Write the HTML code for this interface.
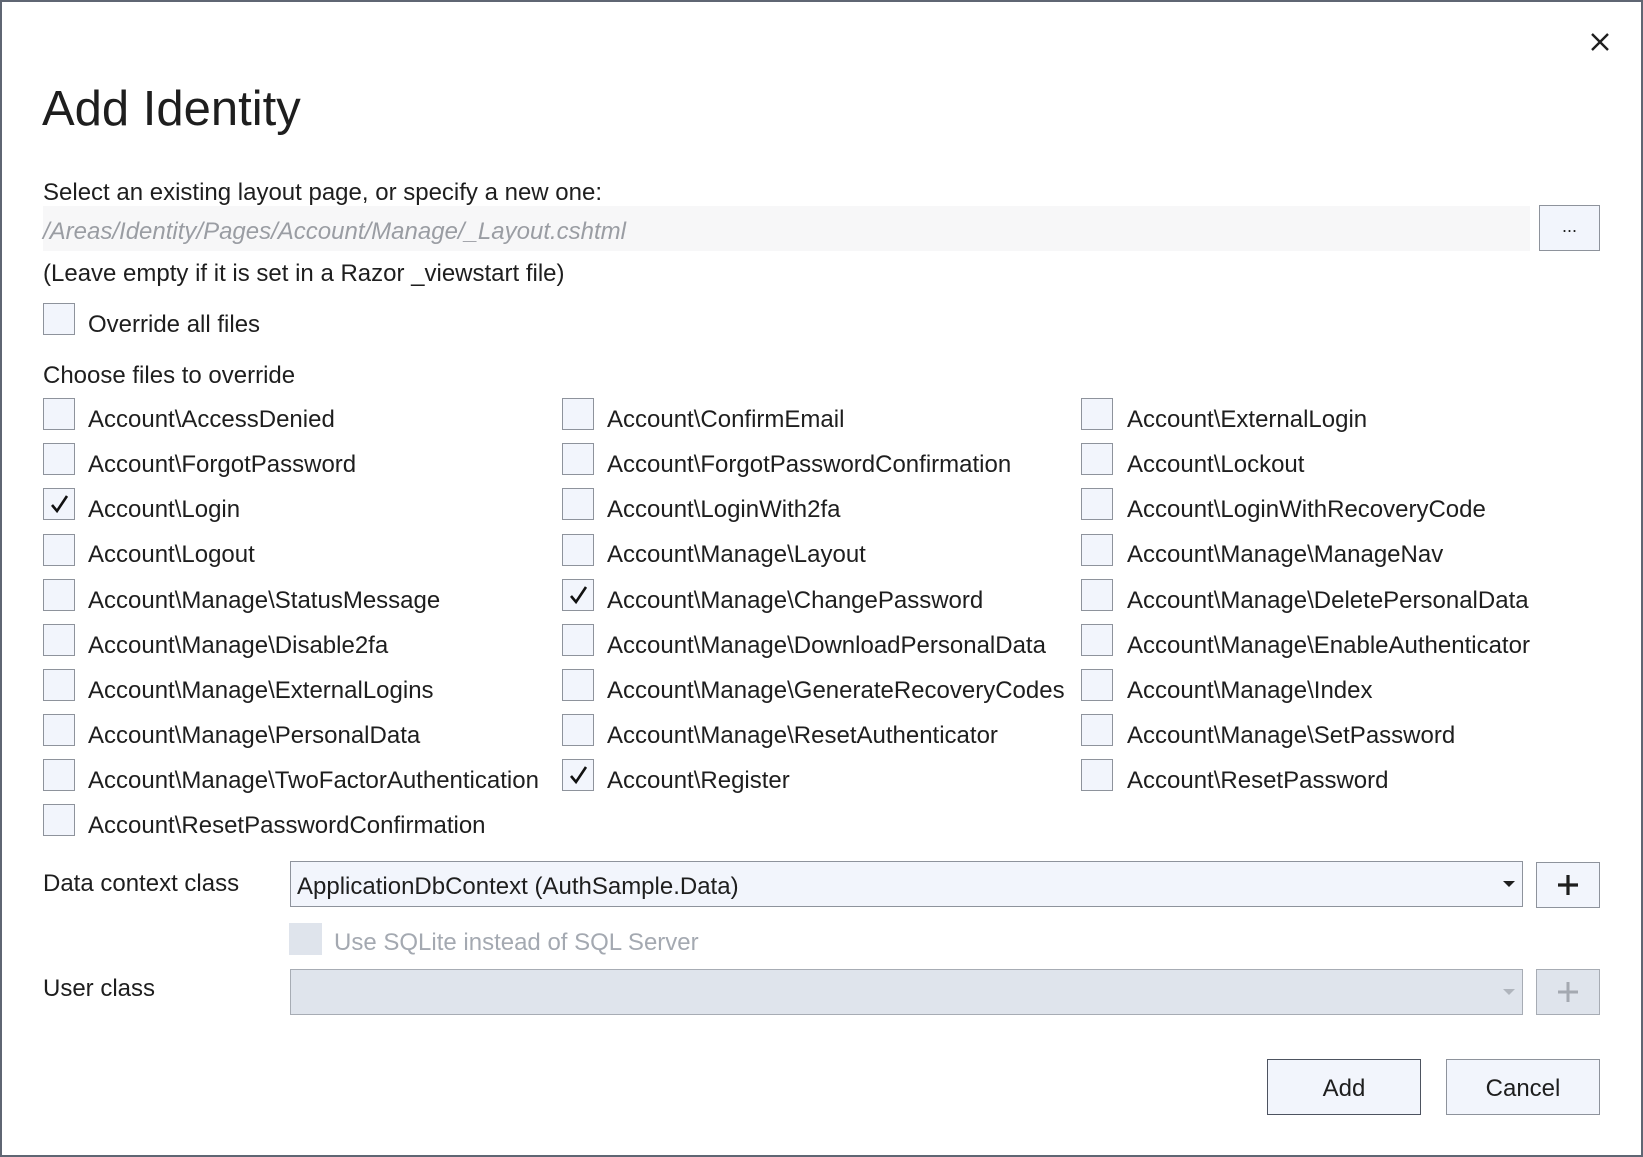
<!DOCTYPE html>
<html><head><meta charset="utf-8"><style>
*{box-sizing:border-box;margin:0;padding:0}
html,body{width:1643px;height:1157px;overflow:hidden;background:#fff}
body{position:relative;font-family:"Liberation Sans",sans-serif;color:#1e1e1e;font-size:24px}
.frame{position:absolute;left:0;top:0;width:1643px;height:1157px;border:2px solid #5f6673}
.a{position:absolute;white-space:nowrap}
.t{position:absolute;white-space:nowrap;height:30px;line-height:30px;font-size:24px;margin-top:3px}
.cb{position:absolute;width:32px;height:32px;background:#f2f5fc;border:1px solid #8e939c}
.cb svg{position:absolute;left:6px;top:5px}
.btn{position:absolute;background:#f2f5fc;border:1px solid #8e939c;text-align:center}
</style></head><body>
<div class="frame"></div>
<svg class="a" style="left:1590px;top:32px" width="20" height="20" viewBox="0 0 20 20"><path d="M2 2L18 18M18 2L2 18" stroke="#1e1e1e" stroke-width="2.4"/></svg>
<div class="a" style="left:42px;top:79px;font-size:49px;line-height:60px;color:#1e1e1e">Add Identity</div>
<div class="t" style="left:43px;top:175px">Select an existing layout page, or specify a new one:</div>
<div class="a" style="left:43px;top:206px;width:1487px;height:45px;background:#f7f7f8"></div>
<div class="t" style="left:43px;top:214px;font-style:italic;color:#9a9da3">/Areas/Identity/Pages/Account/Manage/_Layout.cshtml</div>
<div class="btn" style="left:1539px;top:205px;width:61px;height:46px;line-height:40px;font-size:18px">...</div>
<div class="t" style="left:43px;top:256px">(Leave empty if it is set in a Razor _viewstart file)</div>
<div class="cb" style="left:43px;top:303px"></div>
<div class="t" style="left:88px;top:307px">Override all files</div>
<div class="t" style="left:43px;top:358px">Choose files to override</div>

<div class="cb" style="left:43px;top:398px"></div><div class="t" style="left:88px;top:402px">Account\AccessDenied</div>
<div class="cb" style="left:562px;top:398px"></div><div class="t" style="left:607px;top:402px">Account\ConfirmEmail</div>
<div class="cb" style="left:1081px;top:398px"></div><div class="t" style="left:1127px;top:402px">Account\ExternalLogin</div>

<div class="cb" style="left:43px;top:443px"></div><div class="t" style="left:88px;top:447px">Account\ForgotPassword</div>
<div class="cb" style="left:562px;top:443px"></div><div class="t" style="left:607px;top:447px">Account\ForgotPasswordConfirmation</div>
<div class="cb" style="left:1081px;top:443px"></div><div class="t" style="left:1127px;top:447px">Account\Lockout</div>

<div class="cb" style="left:43px;top:488px"><svg width="20" height="20" viewBox="0 0 20 20"><path d="M2 11L7 17L17 2" fill="none" stroke="#111" stroke-width="2.6"/></svg></div><div class="t" style="left:88px;top:492px">Account\Login</div>
<div class="cb" style="left:562px;top:488px"></div><div class="t" style="left:607px;top:492px">Account\LoginWith2fa</div>
<div class="cb" style="left:1081px;top:488px"></div><div class="t" style="left:1127px;top:492px">Account\LoginWithRecoveryCode</div>

<div class="cb" style="left:43px;top:534px"></div><div class="t" style="left:88px;top:537px">Account\Logout</div>
<div class="cb" style="left:562px;top:534px"></div><div class="t" style="left:607px;top:537px">Account\Manage\Layout</div>
<div class="cb" style="left:1081px;top:534px"></div><div class="t" style="left:1127px;top:537px">Account\Manage\ManageNav</div>

<div class="cb" style="left:43px;top:579px"></div><div class="t" style="left:88px;top:583px">Account\Manage\StatusMessage</div>
<div class="cb" style="left:562px;top:579px"><svg width="20" height="20" viewBox="0 0 20 20"><path d="M2 11L7 17L17 2" fill="none" stroke="#111" stroke-width="2.6"/></svg></div><div class="t" style="left:607px;top:583px">Account\Manage\ChangePassword</div>
<div class="cb" style="left:1081px;top:579px"></div><div class="t" style="left:1127px;top:583px">Account\Manage\DeletePersonalData</div>

<div class="cb" style="left:43px;top:624px"></div><div class="t" style="left:88px;top:628px">Account\Manage\Disable2fa</div>
<div class="cb" style="left:562px;top:624px"></div><div class="t" style="left:607px;top:628px">Account\Manage\DownloadPersonalData</div>
<div class="cb" style="left:1081px;top:624px"></div><div class="t" style="left:1127px;top:628px">Account\Manage\EnableAuthenticator</div>

<div class="cb" style="left:43px;top:669px"></div><div class="t" style="left:88px;top:673px">Account\Manage\ExternalLogins</div>
<div class="cb" style="left:562px;top:669px"></div><div class="t" style="left:607px;top:673px">Account\Manage\GenerateRecoveryCodes</div>
<div class="cb" style="left:1081px;top:669px"></div><div class="t" style="left:1127px;top:673px">Account\Manage\Index</div>

<div class="cb" style="left:43px;top:714px"></div><div class="t" style="left:88px;top:718px">Account\Manage\PersonalData</div>
<div class="cb" style="left:562px;top:714px"></div><div class="t" style="left:607px;top:718px">Account\Manage\ResetAuthenticator</div>
<div class="cb" style="left:1081px;top:714px"></div><div class="t" style="left:1127px;top:718px">Account\Manage\SetPassword</div>

<div class="cb" style="left:43px;top:759px"></div><div class="t" style="left:88px;top:763px">Account\Manage\TwoFactorAuthentication</div>
<div class="cb" style="left:562px;top:759px"><svg width="20" height="20" viewBox="0 0 20 20"><path d="M2 11L7 17L17 2" fill="none" stroke="#111" stroke-width="2.6"/></svg></div><div class="t" style="left:607px;top:763px">Account\Register</div>
<div class="cb" style="left:1081px;top:759px"></div><div class="t" style="left:1127px;top:763px">Account\ResetPassword</div>

<div class="cb" style="left:43px;top:804px"></div><div class="t" style="left:88px;top:808px">Account\ResetPasswordConfirmation</div>

<div class="t" style="left:43px;top:866px">Data context class</div>
<div class="a" style="left:290px;top:861px;width:1233px;height:46px;background:#f2f5fc;border:1px solid #8e939c"></div>
<div class="t" style="left:297px;top:869px">ApplicationDbContext (AuthSample.Data)</div>
<svg class="a" style="left:1502px;top:880px" width="14" height="8"><path d="M1 1L13 1L7 7Z" fill="#1e1e1e"/></svg>
<div class="btn" style="left:1536px;top:862px;width:64px;height:46px"></div>
<svg class="a" style="left:1557px;top:874px" width="22" height="22"><path d="M11 1V21M1 11H21" stroke="#1e1e1e" stroke-width="3.2"/></svg>

<div class="a" style="left:289px;top:923px;width:33px;height:32px;background:#dfe4ec"></div>
<div class="t" style="left:334px;top:925px;color:#a4a9b1">Use SQLite instead of SQL Server</div>

<div class="t" style="left:43px;top:971px">User class</div>
<div class="a" style="left:290px;top:969px;width:1233px;height:46px;background:#dfe4ec;border:1px solid #a7acb4"></div>
<svg class="a" style="left:1502px;top:988px" width="14" height="8"><path d="M1 1L13 1L7 7Z" fill="#b0b5bd"/></svg>
<div class="a" style="left:1536px;top:969px;width:64px;height:46px;background:#dfe4ec;border:1px solid #a7acb4"></div>
<svg class="a" style="left:1557px;top:981px" width="22" height="22"><path d="M11 1V21M1 11H21" stroke="#a4a9b1" stroke-width="3"/></svg>

<div class="btn" style="left:1267px;top:1059px;width:154px;height:56px;line-height:58px;border:1.5px solid #4d5360;font-size:24px">Add</div>
<div class="btn" style="left:1446px;top:1059px;width:154px;height:56px;line-height:58px;font-size:24px">Cancel</div>
</body></html>
